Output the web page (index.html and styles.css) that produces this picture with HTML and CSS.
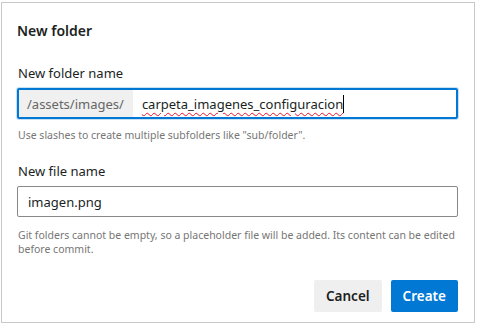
FILE: index.html
```html
<!DOCTYPE html>
<html>
<head>
    <meta charset="utf-8">
    <title>New folder</title>
    <link rel="stylesheet" href="styles.css">
</head>
<body>
<div class="dialog">
    <h2 class="dialog-title">New folder</h2>
    <div class="field">
        <label class="field-label">New folder name</label>
        <div class="input input-focused">
            <span class="input-prefix">/assets/images/</span>
            <span class="input-value"><span class="misspelled">carpeta_imagenes_configuracion</span><span class="caret"></span></span>
        </div>
        <div class="field-hint">Use slashes to create multiple subfolders like "sub/folder".</div>
    </div>
    <div class="field">
        <label class="field-label">New file name</label>
        <div class="input input-plain">imagen.png</div>
        <div class="field-hint field-hint-wide">Git folders cannot be empty, so a placeholder file will be added. Its content can be edited before commit.</div>
    </div>
    <div class="dialog-footer">
        <button class="btn btn-default">Cancel</button>
        <button class="btn btn-primary">Create</button>
    </div>
</div>
</body>
</html>
```
FILE: styles.css
```css
body {
    margin: 0;
    background: #fff;
    font-family: "Noto Sans", "Open Sans", sans-serif;
    color: #201f1e;
}

.dialog {
    box-sizing: border-box;
    width: 474px;
    height: 321px;
    margin: 2px 0 0 1px;
    border: 1px solid #c8c8c8;
    padding: 0 16px 0 15px;
    display: flex;
    flex-direction: column;
}

.dialog-title {
    margin: 18px 0 0 0;
    font-size: 14px;
    font-weight: 600;
    line-height: 20px;
}

.field {
    margin-top: 23px;
}

.field + .field {
    margin-top: 20px;
}

.field-label {
    display: block;
    margin-left: 1px;
    margin-bottom: 6px;
    font-size: 13px;
    line-height: 18px;
}

.input {
    box-sizing: border-box;
    display: flex;
    align-items: stretch;
    height: 31px;
    border: 1px solid #8a8886;
    border-radius: 2px;
    font-size: 13px;
}

.input-plain {
    align-items: center;
    padding-left: 10px;
}

.input-focused {
    border: 2px solid #0078d4;
    box-shadow: 0 0 0 1px #c7e0f4;
}

.input-prefix {
    display: flex;
    align-items: center;
    padding: 0 9px 0 8px;
    background: #f0f0f0;
    color: #666;
}

.input-value {
    display: flex;
    align-items: center;
    padding-left: 9px;
}

.misspelled {
    text-decoration: underline wavy #e81123;
    text-decoration-thickness: 1px;
    text-underline-offset: 3px;
}

.caret {
    display: inline-block;
    width: 1px;
    height: 18px;
    background: #000;
}

.field-hint {
    margin: 9px 0 0 1px;
    font-size: 10.5px;
    line-height: 14px;
    color: #767676;
}

.field-hint-wide {
    margin-top: 11px;
}

.dialog-footer {
    margin-top: auto;
    margin-bottom: 10px;
    display: flex;
    justify-content: flex-end;
    gap: 9px;
}

.btn {
    height: 32px;
    min-width: 67px;
    padding: 0 12px;
    border: none;
    border-radius: 2px;
    font-family: inherit;
    font-size: 13.5px;
    font-weight: 600;
}

.btn-default {
    background: #efefef;
    color: #201f1e;
}

.btn-primary {
    background: #0078d4;
    color: #fff;
}
```
